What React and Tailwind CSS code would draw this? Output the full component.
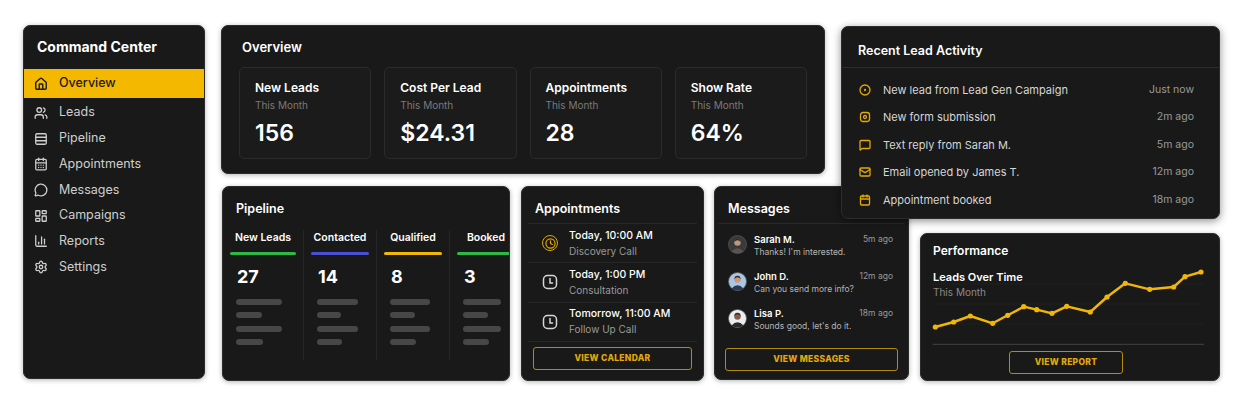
import {
  House,
  Users,
  Rows3,
  CalendarDays,
  MessageCircle,
  LayoutDashboard,
  ChartColumn,
  Settings,
  CircleDot,
  MessageSquare,
  Mail,
  Calendar,
  Clock,
} from "lucide-react";

const FONT = { fontFamily: "Inter, 'Liberation Sans', sans-serif" };

const navItems = [
  { label: "Leads", icon: Users },
  { label: "Pipeline", icon: Rows3 },
  { label: "Appointments", icon: CalendarDays },
  { label: "Messages", icon: MessageCircle },
  { label: "Campaigns", icon: LayoutDashboard },
  { label: "Reports", icon: ChartColumn },
  { label: "Settings", icon: Settings },
];

const stats = [
  { label: "New Leads", value: "156" },
  { label: "Cost Per Lead", value: "$24.31" },
  { label: "Appointments", value: "28" },
  { label: "Show Rate", value: "64%" },
];

const FormIcon = ({ size = 12 }) => (
  <svg width={size} height={size} viewBox="0 0 24 24" fill="none" stroke="currentColor" strokeWidth="2.6">
    <rect x="3" y="3" width="18" height="18" rx="5" />
    <circle cx="12" cy="12" r="3" />
  </svg>
);

const activity = [
  { text: "New lead from Lead Gen Campaign", time: "Just now", icon: CircleDot },
  { text: "New form submission", time: "2m ago", icon: FormIcon },
  { text: "Text reply from Sarah M.", time: "5m ago", icon: MessageSquare },
  { text: "Email opened by James T.", time: "12m ago", icon: Mail },
  { text: "Appointment booked", time: "18m ago", icon: Calendar },
];

const pipeline = [
  { label: "New Leads", value: "27", color: "bg-[#2fb845]", bars: [46, 26, 46, 27] },
  { label: "Contacted", value: "14", color: "bg-[#4a4fd8]", bars: [41, 24, 41, 25] },
  { label: "Qualified", value: "8", color: "bg-[#f2b705]", bars: [40, 25, 40, 26] },
  { label: "Booked", value: "3", color: "bg-[#2fb845]", bars: [38, 25, 38, 26] },
];

const appointments = [
  { time: "Today, 10:00 AM", title: "Discovery Call", active: true },
  { time: "Today, 1:00 PM", title: "Consultation" },
  { time: "Tomorrow, 11:00 AM", title: "Follow Up Call" },
];

const messages = [
  { name: "Sarah M.", text: "Thanks! I'm interested.", time: "5m ago", bg: "#3a3a3a", skin: "#b79a82", shirt: "#5a5450" },
  { name: "John D.", text: "Can you send more info?", time: "12m ago", bg: "#a9c6e6", skin: "#c99a7a", shirt: "#2b3a55" },
  { name: "Lisa P.", text: "Sounds good, let's do it.", time: "18m ago", bg: "#e9eef2", skin: "#8a5a44", shirt: "#2a2a2a" },
];

const chartPoints = [
  [4.3, 63], [22.7, 58], [39.3, 52], [61.7, 59.3], [76.7, 51.3], [92.7, 42.7],
  [105.7, 45.7], [121, 49.3], [135.7, 42.3], [159.3, 48], [176, 33], [194.3, 19.3],
  [218.7, 25.3], [242.7, 23], [254, 12.7], [270, 8],
];

const Card = ({ className = "", children }) => (
  <div
    className={`bg-[#191919] border border-[#2c2c2c] rounded-[7px] shadow-[0_1px_5px_rgba(0,0,0,0.3)] ${className}`}
  >
    {children}
  </div>
);

const Avatar = ({ bg, skin, shirt }) => (
  <svg width="19" height="19" viewBox="0 0 20 20">
    <circle cx="10" cy="10" r="9.5" fill={bg} stroke="#555" strokeWidth="0.8" />
    <path d="M3.5 17.5 Q10 10.5 16.5 17.5 Q10 21 3.5 17.5Z" fill={shirt} />
    <circle cx="10" cy="8" r="3.4" fill={skin} />
    <path d="M6.6 7.6 Q7 3.8 10 4 Q13 3.8 13.4 7.6 Q12 5.6 10 5.6 Q8 5.6 6.6 7.6Z" fill="#3b2a20" />
  </svg>
);

const BoxClock = ({ active }) =>
  active ? (
    <span className="flex items-center justify-center w-[16px] h-[16px] rounded-full border-[1.5px] border-[#e0a800] text-[#e0a800]">
      <Clock size={11} strokeWidth={2.6} />
    </span>
  ) : (
    <svg width="16" height="16" viewBox="0 0 16 16" fill="none" stroke="#d6d6d6" strokeWidth="1.5">
      <rect x="1.5" y="1.5" width="13" height="13" rx="4" />
      <path d="M8 4.5V9H10.5" strokeLinecap="round" />
    </svg>
  );

const OutlineButton = ({ children, className = "" }) => (
  <button
    className={`block h-[23px] border-[1.5px] border-[#b38b0d] rounded-[3px] text-[8.5px] leading-none font-extrabold tracking-[0.3px] text-[#e2aa08] uppercase ${className}`}
  >
    {children}
  </button>
);

export default function App() {
  return (
    <div style={FONT} className="bg-white w-[1250px] h-[407px] overflow-hidden pt-[25px] pl-[23px] flex gap-[16px]">
      {/* SIDEBAR */}
      <Card className="w-[182px] h-[354px] shrink-0 overflow-hidden">
        <div className="pl-[13px] pt-[11px] h-[43px] text-[14px] leading-[20px] font-bold text-white">Command Center</div>
        <div className="h-[29px] bg-[#f5b800] flex items-center pl-[10px] gap-[11px] text-[#1a1a1a]">
          <House size={14} strokeWidth={2.4} />
          <span className="text-[12.5px] font-medium">Overview</span>
        </div>
        <div className="mt-[2px]">
          {navItems.map(({ label, icon: Icon }) => (
            <div key={label} className="h-[25.7px] flex items-center pl-[10px] gap-[11px] text-[#cfcfcf]">
              <Icon size={14} strokeWidth={2.2} />
              <span className="text-[12.5px]">{label}</span>
            </div>
          ))}
        </div>
      </Card>

      {/* MAIN */}
      <div className="w-[1000px] shrink-0">
        {/* TOP ROW */}
        <div className="flex gap-[16px] h-[149px] items-start">
          <Card className="w-[604px] h-[149px] px-[17px] pt-[12px]">
            <div className="pl-[3px] text-[13px] leading-[18px] font-semibold text-white">Overview</div>
            <div className="grid grid-cols-4 gap-[13px] mt-[11px]">
              {stats.map((s) => (
                <div key={s.label} className="h-[92px] rounded-[5px] border border-[#2b2b2b] bg-[#1b1b1b] pl-[15px] pt-[12px]">
                  <div className="text-[12px] leading-[16px] font-semibold text-white">{s.label}</div>
                  <div className="text-[10px] leading-[13px] mt-[3px] text-[#7a7a7a]">This Month</div>
                  <div className="text-[23px] leading-[26px] font-semibold text-white mt-[8px]">{s.value}</div>
                </div>
              ))}
            </div>
          </Card>

          <Card className="relative z-10 w-[379px] h-[193px] mt-[1px] bg-[#1a1a1a] shadow-[0_2px_8px_rgba(0,0,0,0.45)]">
            <div className="h-[41px] pl-[16px] pt-[15px] border-b border-[#2c2c2c]">
              <div className="text-[12.5px] leading-[18px] font-semibold text-white">Recent Lead Activity</div>
            </div>
            <div className="pt-[8px] pl-[17px] pr-[25px]">
              {activity.map(({ text, time, icon: Icon }) => (
                <div key={text} className="h-[27.5px] flex items-center">
                  <span className="text-[#e2aa08] w-[12px] flex justify-center">
                    <Icon size={12} strokeWidth={2.6} />
                  </span>
                  <span className="ml-[12px] text-[11px] text-[#d6d6d6]">{text}</span>
                  <span className="ml-auto text-[10.5px] text-[#9a9a9a]">{time}</span>
                </div>
              ))}
            </div>
          </Card>
        </div>

        {/* BOTTOM ROW */}
        <div className="flex items-start mt-[12px]">
          {/* Pipeline */}
          <Card className="ml-[1px] w-[288px] h-[195px] overflow-hidden pt-[13px]">
            <div className="pl-[13px] text-[12.5px] leading-[18px] font-semibold text-white">Pipeline</div>
            <div className="flex pl-[7px] mt-[12px]">
              {pipeline.map((p, i) => (
                <div
                  key={p.label}
                  className={`w-[73px] shrink-0 h-[130px] pr-[7px] ${i === 0 ? "" : "pl-[7px] border-l border-[#262626]"}`}
                >
                  <div className="text-center text-[10.5px] leading-[16px] font-semibold text-white">{p.label}</div>
                  <div className={`mt-[6px] h-[2.5px] rounded-full ${p.color}`} />
                  <div className="pl-[7px] mt-[11px] text-[18px] leading-[22px] font-bold text-white">{p.value}</div>
                  <div className="pl-[6px] mt-[11px] flex flex-col gap-[7.5px]">
                    {p.bars.map((w, j) => (
                      <div key={j} className="h-[6px] rounded-full bg-[#474747]" style={{ width: w }} />
                    ))}
                  </div>
                </div>
              ))}
            </div>
          </Card>

          {/* Appointments */}
          <Card className="ml-[11px] w-[183px] h-[195px] pt-[13px]">
            <div className="pl-[13px] text-[12.5px] leading-[18px] font-semibold text-white">Appointments</div>
            <div className="mx-[6px] mt-[5px] border-t border-[#262626]">
              {appointments.map((a) => (
                <div key={a.time} className="h-[39.3px] flex items-center gap-[11px] pl-[14px] border-b border-[#262626]">
                  <BoxClock active={a.active} />
                  <div>
                    <div className="text-[10.5px] leading-[14px] font-medium text-white">{a.time}</div>
                    <div className="text-[10px] leading-[14px] mt-[1px] text-[#9a9a9a]">{a.title}</div>
                  </div>
                </div>
              ))}
            </div>
            <div className="px-[11px] mt-[5px]">
              <OutlineButton className="w-full">View Calendar</OutlineButton>
            </div>
          </Card>

          {/* Messages */}
          <Card className="ml-[10px] w-[195px] h-[194px] pt-[13px]">
            <div className="pl-[13px] text-[12.5px] leading-[18px] font-semibold text-white">Messages</div>
            <div className="mx-[4px] mt-[5px] border-t border-[#2a2a2a] pt-[9px]">
              {messages.map((m) => (
                <div key={m.name} className="h-[37px] flex items-start pl-[9px] pr-[11px]">
                  <div className="mt-[2px] shrink-0">
                    <Avatar bg={m.bg} skin={m.skin} shirt={m.shirt} />
                  </div>
                  <div className="ml-[7px] whitespace-nowrap">
                    <div className="text-[9.5px] leading-[13px] font-semibold text-white">{m.name}</div>
                    <div className="text-[8.5px] leading-[13px] text-[#b5b5b5]">{m.text}</div>
                  </div>
                  <div className="ml-auto whitespace-nowrap text-[8.5px] leading-[13px] text-[#9a9a9a]">{m.time}</div>
                </div>
              ))}
            </div>
            <div className="px-[10px] mt-[4px]">
              <OutlineButton className="w-full">View Messages</OutlineButton>
            </div>
          </Card>

          {/* Performance */}
          <Card className="ml-[11px] mt-[47px] w-[300px] h-[148px] pt-[8px]">
            <div className="pl-[12px] text-[12px] leading-[18px] font-semibold text-white">Performance</div>
            <div className="relative mx-[10px] h-[85px] mt-[4px]">
              <svg className="absolute inset-0" width="280" height="85" viewBox="0 0 280 85">
                {[20, 40, 60].map((y) => (
                  <line key={y} x1="2" x2="273" y1={y} y2={y} stroke="#222" strokeWidth="0.8" />
                ))}
                <line x1="1.7" x2="273" y1="80.3" y2="80.3" stroke="#3a3a3a" strokeWidth="1.2" />
                <polyline
                  points={chartPoints.map((p) => p.join(",")).join(" ")}
                  fill="none"
                  stroke="#f2b705"
                  strokeWidth="2.4"
                  strokeLinejoin="round"
                />
                {chartPoints.map(([x, y], i) => (
                  <circle key={i} cx={x} cy={y} r="2.6" fill="#f2b705" />
                ))}
              </svg>
              <div className="relative pl-[2px] pt-[5.5px]">
                <div className="text-[11px] leading-[15px] font-semibold text-white">Leads Over Time</div>
                <div className="text-[10px] leading-[15px] text-[#8a8a8a]">This Month</div>
              </div>
            </div>
            <OutlineButton className="ml-[88px] mt-[2px] w-[114px] h-[22px]">View Report</OutlineButton>
          </Card>
        </div>
      </div>
    </div>
  );
}
